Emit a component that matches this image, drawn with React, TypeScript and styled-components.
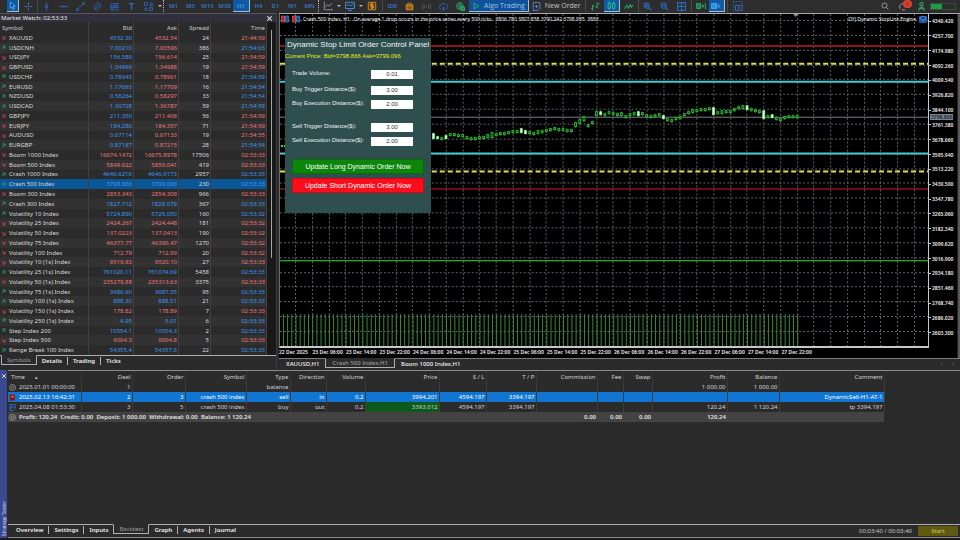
import React from "react";
import styled, { createGlobalStyle, css } from "styled-components";

const Global = createGlobalStyle`
  * { box-sizing: border-box; }
  html, body { margin: 0; background: #2b2b2b; }
  body { font-family: "Noto Sans", "Open Sans", sans-serif; font-size: 6px; line-height: 8px; color: #dadada; overflow: hidden; }
  button, input { font: inherit; color: inherit; border: 0; padding: 0; margin: 0; background: none; border-radius: 0; }
`;

const BLUE = "#3b98ec";
const RED = "#f07676";
const GREEN = "#27a567";

const Page = styled.div`
  height: 100vh;
  display: grid;
  grid-template-rows: 13px minmax(0, 1fr) 170px;
  grid-template-columns: minmax(0, 1fr);
`;

/* ---------- toolbar ---------- */
const Toolbar = styled.header`
  display: flex;
  align-items: stretch;
  height: 12px;
  padding: 0 4px 0 7px;
  background: #2d2d2e;
`;
const Tool = styled.button<{ $w?: number; $on?: boolean; $c?: string }>`
  flex: none;
  width: ${(p) => p.$w ?? 17}px;
  display: flex;
  align-items: center;
  justify-content: center;
  color: ${(p) => p.$c ?? "#2c69bd"};
  ${(p) =>
    p.$on &&
    css`
      background: #0f5aa3;
      border-right: 1px solid #a8bccd;
      border-bottom: 1px solid #a8bccd;
    `}
`;
const Period = styled(Tool)`
  font-weight: 500;
  color: ${(p) => (p.$on ? "#4ba4f6" : "#3580de")};
`;
const Wide = styled.button<{ $on?: boolean }>`
  flex: none;
  display: flex;
  align-items: center;
  gap: 4px;
  padding: 0 3px;
  font-size: 7px;
  font-family: "Open Sans", "Noto Sans", sans-serif;
  color: ${(p) => (p.$on ? "#a3c8e6" : "#c6c6c6")};
  background: ${(p) => (p.$on ? "#0f519b" : "transparent")};
  border-right: ${(p) => (p.$on ? "1px solid #a8bccd" : "0")};
  border-bottom: ${(p) => (p.$on ? "1px solid #a8bccd" : "0")};
`;
const Sep = styled.span<{ $dotted?: boolean; $m?: number }>`
  flex: none;
  width: 1px;
  margin: 0 ${(p) => p.$m ?? 0}px;
  border-left: 1px ${(p) => (p.$dotted ? "dotted #b5b5b5" : "solid #4b4b4b")};
`;
const Caret = styled.i<{ $w: number }>`
  flex: none;
  width: ${(p) => p.$w}px;
  display: flex;
  align-items: center;
  justify-content: center;
  &::before {
    content: "";
    border: 2px solid transparent;
    border-top-color: #b8b8b8;
    border-bottom: 0;
  }
`;
const Push = styled.span`
  flex: 1;
`;
const Battery = styled.span`
  align-self: center;
  flex: none;
  width: 26px;
  height: 7px;
  border: 1px solid #3c4d40;
  background: linear-gradient(90deg, #1f9d46 0 11px, #263029 11px);
`;
const Badge = styled.span`
  position: absolute;
  top: 0;
  right: 0;
  width: 9px;
  height: 8px;
  border-radius: 4px;
  background: #d9402b;
  color: #7e1d12;
  font-size: 5px;
  line-height: 8px;
`;
const BellTool = styled(Tool)`
  position: relative;
`;

const shapes: Record<string, React.ReactNode> = {
  cursor: <path d="M4 2v11l3-3 2 5 2-1-2-5h4z" fill="#0e3d7d" stroke="#5cb1ff" />,
  cross: <path d="M8 1v5M8 10v5M1 8h5M10 8h5M8 7.500v1" stroke="#3d83d8" />,
  vline: <path d="M8 0v5M8 11v5M6 6h4v4H6z" />,
  hline: <path d="M0 8h6M10 8h6M6 7h4v2H6z" />,
  trend: <path d="M4 12 12 4M1 12h3v3H1zM12 1h3v3h-3z" />,
  channel: <path d="M1 9 9 1M6 15l9-8M3 12l9-8M1 9l5 6M9 1l6 6" />,
  fibo: <path d="M0 3h16M0 7h16M0 10h16M0 14h16M1 14l13-11" />,
  text: <path d="M3 3h10M8 3v11" strokeWidth="2.400" />,
  figures: <path d="M1 1h5v5H1zM10 6l3-5 3 5zM1 13a2.500 2.500 0 1 0 5 0 2.500 2.500 0 1 0-5 0M10 10h5v5h-5z" />,
  axis: <path d="M2 1v13h14M3 10l4-4 3 2 5-5" stroke="#8a8f92" />,
  monitor: <path d="M1 2h14v10H1zM5 15h6M3 8l3-3 3 3 4-3" stroke="#3f8ee0" />,
  money: (
    <>
      <path d="M2 2h12v12H2z" stroke="#c97f1c" fill="#5f3d0d" />
      <path d="M10 5H6v3h4v3H6M8 3v10" stroke="#e9a131" />
    </>
  ),
  bag: (
    <>
      <path d="M2 5h12v9H2z" fill="#b66e14" stroke="#cd8427" />
      <path d="M5 5V2h6v3" stroke="#cd8427" />
      <path d="M6 8v4M10 8v4" stroke="#6d3f08" />
    </>
  ),
  signal: <path d="M8 7v2M5 5q-2 3 0 6M11 5q2 3 0 6M2 3q-3 5 0 10M14 3q3 5 0 10" stroke="#5d6265" />,
  cloud: <path d="M4 12H3a3 3 0 0 1 0-6 5 5 0 0 1 9-1 3.500 3.500 0 0 1 1 7h-1M8 8v7M5.500 12 8 15l2.500-3" />,
  globe: (
    <>
      <path d="M1 7a6 6 0 1 0 12 0 6 6 0 1 0-12 0M1 7h12M7 1q-4 6 0 12M7 1q4 6 0 12" stroke="#279f63" />
      <path d="M9 9h6v6H9z" fill="#1d7b4b" stroke="#35b67b" />
    </>
  ),
  play: <path d="M4 2v12l9-6z" stroke="#29b36e" strokeWidth="2" />,
  order: <path d="M2 1h12v11l-3 3H2zM8 5v6M5 8h6" stroke="#5c87c8" />,
  bars: <path d="M3 5v10M3 12H0M3 7h3M11 1v10M11 9H8M11 3h4" stroke={GREEN} strokeWidth="2" />,
  candles: <path d="M2 4h4v9H2zM10 4h4v9h-4zM4 1v3M4 13v2M12 1v3M12 13v2" stroke="#2ecb80" />,
  wave: <path d="M1 12 5 6l3 5 3-6 2 4 3-4" stroke={GREEN} strokeWidth="2" />,
  zoomin: <path d="M2 6.500a4.500 4.500 0 1 0 9 0 4.500 4.500 0 1 0-9 0M10 10l5 5M4 6.500h5M6.500 4v5" strokeWidth="2" />,
  zoomout: <path d="M2 6.500a4.500 4.500 0 1 0 9 0 4.500 4.500 0 1 0-9 0M10 10l5 5M4 6.500h5" strokeWidth="2" />,
  grid: <path d="M1 1h14v14H1zM8 1v14M1 8h14" strokeWidth="2" />,
  scroll: (
    <>
      <path d="M1 4h6v8H1z" fill="#1a7d4a" stroke={GREEN} />
      <path d="M8 8h4M10 5l3 3-3 3M15 3v10" stroke={GREEN} />
    </>
  ),
  shift: (
    <>
      <path d="M1 4h6v8H1z" fill="#2d87d6" stroke="#49a6ee" />
      <path d="M9 3v10M11 8h4M13 5l-2 3 2 3" stroke="#49a6ee" />
    </>
  ),
  camera: (
    <>
      <path d="M1 1h14v4M1 1v14h2" strokeDasharray="2 2" />
      <path d="M4 7h11v8H4zM8 11a1.500 1.500 0 1 0 3 0 1.500 1.500 0 1 0-3 0" />
    </>
  ),
  search: <path d="M2 7a5 5 0 1 0 10 0A5 5 0 1 0 2 7M11 11l4 4" stroke="#b2b2b2" />,
  bell: <path d="M2 12a6 6 0 1 1 11-4M5 14h6" stroke="#a7a7a7" />,
  person: <path d="M5 4a3 3 0 1 0 6 0 3 3 0 1 0-6 0M8 7v4M3 15q0-5 5-5t5 5M5 12h6" stroke={GREEN} strokeWidth="2" />,
  up: <path d="M3 13 12 4M5 3h8v8" stroke={GREEN} strokeWidth="3" />,
  down: <path d="m3 3 9 9M13 5v8H5" stroke="#d3424c" strokeWidth="3" />,
  close: <path d="m3 3 10 10M13 3 3 13" stroke="#e6e6e6" strokeWidth="2.400" />,
  coin: <path d="M1 8a7 7 0 1 0 14 0A7 7 0 1 0 1 8M5 8a3 3 0 1 0 6 0 3 3 0 1 0-6 0" stroke="#a7a7a7" />,
  sell: (
    <>
      <path d="M2 1h11v14H2z" stroke="#a92a26" fill="#7e1616" />
      <path d="M6 4h4v4H6z" fill="#e98a80" stroke="none" />
    </>
  ),
  buy: <path d="M2 1h12v9l-5 5H2zM5 4v7M5 7h7" stroke="#2d78cf" strokeWidth="2" />,
  cap: (
    <>
      <path d="M1 3h14v12H1z" fill="#123f86" stroke="#2468b8" />
      <path d="m1 6 7-4 7 4-7 4zM4 8v4h8V8" stroke="#4893e6" />
    </>
  ),
  depth: (
    <>
      <path d="M1 2h6v12H1z" fill="#b52222" stroke="#d85a50" />
      <path d="M9 2h6v12H9z" fill="#174fa0" stroke="#4a7ed0" />
    </>
  ),
};
const Svg = styled.svg`
  flex: none;
  display: block;
  fill: none;
  stroke: currentColor;
  stroke-width: 1.6;
`;
const Icon = ({ n, s = 9 }: { n: string; s?: number }) => (
  <Svg width={s} height={s} viewBox="0 0 16 16" aria-hidden="true">
    {shapes[n]}
  </Svg>
);

/* ---------- market watch ---------- */
const Main = styled.main`
  display: grid;
  grid-template-columns: 277px minmax(0, 1fr);
  column-gap: 2px;
  min-height: 0;
`;
const Watch = styled.section`
  display: grid;
  grid-template-rows: 9px minmax(0, 1fr) 15px;
  min-height: 0;
  border-right: 1px solid #3b3b3b;
`;
const WatchTitle = styled.div`
  display: flex;
  justify-content: space-between;
  align-items: center;
  padding: 0 3px 0 1px;
  background: #30313c;
  color: #ececec;
  border-top: 1px solid #55565c;
`;
const WatchBody = styled.div`
  display: grid;
  grid-template-columns: minmax(0, 1fr) 9px;
  min-height: 0;
`;
const ScrollTrack = styled.div`
  display: flex;
  justify-content: center;
  background: #191919;
  padding-top: 8px;
  &::before {
    content: "";
    width: 1px;
    height: 70%;
    background: #a5a5a5;
  }
`;
const Quotes = styled.table`
  display: grid;
  grid-template-rows: 11px minmax(0, 1fr);
  min-height: 0;
  background: #2b2b2b;
  tbody { display: grid; grid-auto-rows: minmax(0, 1fr); min-height: 0; }
`;
const QuoteRow = styled.tr<{ $sel?: boolean }>`
  display: grid;
  grid-template-columns: minmax(0, 1fr) 45px 45px 32px 56px;
  align-items: stretch;
  thead & { height: 11px; }
  tbody &:nth-child(even) { background: #323232; }
  ${(p) => p.$sel && css`&& { background: #0b5696 !important; }`}
`;
const cell = css`
  display: flex;
  align-items: center;
  justify-content: flex-end;
  font-weight: 400;
  padding: 0 1px 0 0;
  min-width: 0;
  white-space: nowrap;
`;
const Cell = styled.td<{ $c?: string }>`
  ${cell}
  color: ${(p) => p.$c ?? "#dadada"};
  border-right: 1px solid #414141;
`;
const Head = styled.th`
  ${cell}
  color: #cccccc;
  border-right: 1px solid #414141;
  &:first-child { justify-content: flex-start; padding-left: 2px; }
`;
const SymbolCell = styled(Cell)`
  justify-content: flex-start;
  gap: 3px;
  padding-left: 1px;
`;

type Quote = [string, string, string, string, string, "u" | "d"];
const quotes: Quote[] = [
  ["XAUUSD", "4532.30", "4532.54", "24", "21:44:59", "d"],
  ["USDCNH", "7.00210", "7.00596", "386", "21:54:03", "u"],
  ["USDJPY", "156.589", "156.614", "25", "21:54:59", "d"],
  ["GBPUSD", "1.34969", "1.34988", "19", "21:54:59", "d"],
  ["USDCHF", "0.78943", "0.78961", "18", "21:54:59", "u"],
  ["EURUSD", "1.17693", "1.17709", "16", "21:54:54", "u"],
  ["NZDUSD", "0.58264", "0.58297", "33", "21:54:54", "u"],
  ["USDCAD", "1.36728", "1.36787", "59", "21:54:59", "u"],
  ["GBPJPY", "211.350", "211.406", "56", "21:54:59", "d"],
  ["EURJPY", "184.286", "184.357", "71", "21:54:59", "d"],
  ["AUDUSD", "0.67114", "0.67133", "19", "21:54:55", "d"],
  ["EURGBP", "0.87187", "0.87215", "28", "21:54:54", "u"],
  ["Boom 1000 Index", "16674.1472", "16675.8978", "17506", "02:53:33", "d"],
  ["Boom 500 Index", "5849.622", "5850.041", "419", "02:53:33", "d"],
  ["Crash 1000 Index", "4646.6216", "4646.9173", "2957", "02:53:33", "u"],
  ["Crash 500 Index", "3798.866", "3799.096", "230", "02:53:33", "u"],
  ["Boom 300 Index", "2853.343", "2854.309", "966", "02:53:33", "d"],
  ["Crash 300 Index", "1827.712", "1828.079", "367", "02:53:33", "u"],
  ["Volatility 10 Index", "5724.890", "5725.050", "160", "02:53:32", "u"],
  ["Volatility 25 Index", "2424.267", "2424.448", "181", "02:53:32", "d"],
  ["Volatility 50 Index", "137.0223", "137.0413", "190", "02:53:32", "d"],
  ["Volatility 75 Index", "46377.77", "46390.47", "1270", "02:53:32", "d"],
  ["Volatility 100 Index", "712.79", "712.99", "20", "02:53:32", "d"],
  ["Volatility 10 (1s) Index", "9519.83", "9520.10", "27", "02:53:33", "d"],
  ["Volatility 25 (1s) Index", "761020.11", "761074.69", "5458", "02:53:33", "u"],
  ["Volatility 50 (1s) Index", "235279.88", "235313.63", "3375", "02:53:33", "d"],
  ["Volatility 75 (1s) Index", "3686.60", "3687.55", "95", "02:53:33", "u"],
  ["Volatility 100 (1s) Index", "888.30", "888.51", "21", "02:53:33", "u"],
  ["Volatility 150 (1s) Index", "178.82", "178.89", "7", "02:53:33", "d"],
  ["Volatility 250 (1s) Index", "4.95", "5.01", "6", "02:53:33", "u"],
  ["Step Index 200", "10554.1", "10554.3", "2", "02:53:33", "u"],
  ["Step Index 500", "6004.3", "6004.8", "5", "02:53:33", "d"],
  ["Range Break 100 Index", "54355.4", "54357.6", "22", "02:53:33", "u"],
];

const Tabs = styled.nav<{ $pad?: number }>`
  display: flex;
  align-items: flex-start;
  border-top: 1px solid #b0b0b0;
  padding-left: ${(p) => p.$pad ?? 1}px;
  background: #2b2b2b;
`;
const Tab = styled.button<{ $on?: boolean }>`
  position: relative;
  flex: none;
  height: 10px;
  margin-top: ${(p) => (p.$on ? -1 : 0)}px;
  padding: 0 5px;
  color: ${(p) => (p.$on ? "#9c9c9c" : "#f0f0f0")};
  font-weight: ${(p) => (p.$on ? 400 : 600)};
  ${(p) =>
    p.$on
      ? css`
          background: #2b2b2b;
          border: 1px solid #b0b0b0;
          border-top-color: #2b2b2b;
        `
      : ""}
`;
const Divider = styled.i`
  flex: none;
  width: 1px;
  height: 8px;
  margin-top: 1px;
  background: #b0b0b0;
`;
const TabList = ({ items, active }: { items: string[]; active: string }) => (
  <>
    {items.map((t, i) => (
      <React.Fragment key={t}>
        {i > 0 && t !== active && items[i - 1] !== active && <Divider />}
        <Tab $on={t === active}>{t}</Tab>
      </React.Fragment>
    ))}
  </>
);

/* ---------- chart ---------- */
const Chart = styled.section`
  display: grid;
  grid-template-columns: minmax(0, 1fr) 28px 3px;
  grid-template-rows: minmax(0, 1fr) 10px 12px;
  min-height: 0;
  background: #000;
  border-top: 1px solid #a9a9a9;
  font-family: "Noto Sans", sans-serif;
  font-size: 5px;
  line-height: 6px;
  font-weight: 600;
  color: #f0f0f0;
  white-space: nowrap;
`;
const Plot = styled.div`
  position: relative;
  min-height: 0;
  border: solid #c8c8c8;
  border-width: 0 1px 2px 1px;
  border-left-color: #6e6e6e;
`;
const PlotSvg = styled.svg`
  display: block;
  width: 100%;
  height: 100%;
`;
const ChartTitle = styled.div`
  position: absolute;
  top: 1px;
  left: 1px;
  right: 1px;
  display: flex;
  align-items: center;
  gap: 3px;
  height: 8px;
  font-weight: 400;
  font-family: "Open Sans", "Noto Sans", sans-serif;
  color: #fff;
`;
const Pre = styled.span`
  white-space: pre;
`;
const PriceAxis = styled.div`
  position: relative;
  display: flex;
  flex-direction: column;
  justify-content: space-between;
  padding: 4px 0 12px;
`;
const Price = styled.span`
  display: flex;
  align-items: center;
  gap: 1px;
  &::before { content: ""; width: 2px; height: 1px; background: #c8c8c8; }
`;
const Current = styled.span`
  position: absolute;
  top: 30%;
  left: 1px;
  padding: 0 1px;
  background: #76828f;
  color: #1c2733;
`;
const SideScroll = styled.div`
  background: #5a5a5a;
  border-left: 1px solid #222;
  grid-row: span 2;
`;
const TimeAxis = styled.div`
  display: grid;
  grid-template-columns: repeat(16, minmax(0, 67fr)) minmax(0, 228fr);
  padding-top: 1px;
  grid-column: span 2;
  margin-right: 28px;
`;
const ChartTabs = styled(Tabs)`
  grid-column: 1 / -1;
  border-top-color: #7c7c7c;
  font-size: 6px;
  line-height: 8px;
  ${Tab} { font-weight: 500; padding: 0 6px; }
`;
const TabArrows = styled.span`
  margin-left: auto;
  padding: 1px 6px 0 0;
  color: #6b6b6b;
  display: flex;
  gap: 9px;
`;

const prices = Array.from({ length: 22 }, (_, i) => (4340.42 - 82.72 * i).toFixed(3));
const times = Array.from({ length: 16 }, (_, i) =>
  i === 0 ? "22 Dec 2025" : `${22 + Math.ceil(i / 3)} Dec ${["22:00", "06:00", "14:00"][i % 3]}`
);

/* course of the price: plot x, plot y */
const course: [number, number][] = [
  [153, 123], [158, 125], [162, 125], [170, 121], [182, 122], [191, 125], [203, 124], [216, 121], [228, 119],
  [246, 117], [254, 120], [260, 119], [267, 117], [275, 115], [288, 117], [304, 115], [312, 110], [320, 104],
  [328, 99], [336, 101], [346, 103], [354, 100], [364, 100], [371, 103], [380, 101], [388, 106], [392, 107],
  [400, 104], [409, 99], [417, 97], [430, 95], [434, 100], [442, 98], [451, 98], [459, 94], [463, 93], [468, 95],
  [480, 98], [484, 102], [493, 103], [501, 106], [509, 103], [519, 103],
];
const priceAt = (x: number) => {
  const k = Math.max(1, course.findIndex(([cx]) => cx >= x));
  const [x0, y0] = course[k - 1];
  const [x1, y1] = course[k];
  return y0 + ((y1 - y0) * (x - x0)) / (x1 - x0);
};
/* larger bodies, by candles counted back from the newest: top, bottom, falling */
const bodies: Record<number, [number, number, boolean]> = {
  87: [120, 125, true], 86: [123, 125, true], 84: [122, 125, true], 74: [121, 124, false], 73: [119, 124, false],
  66: [115, 119, true], 65: [117, 120, true], 62: [117, 120, false], 53: [109, 113, false], 52: [106, 110, false],
  51: [103, 107, false], 48: [98, 102, false], 47: [98, 101, true], 42: [99, 102, false], 38: [98, 102, true],
  36: [101, 103, false], 32: [102, 105, true], 28: [103, 105, false], 25: [96, 99, false], 20: [94, 101, true],
  18: [97, 100, false], 13: [92, 95, false], 12: [92, 96, true], 8: [97, 105, true], 6: [101, 104, true],
  3: [103, 105, false], 1: [102, 104, false],
};

const PlotDrawing = () => {
  const W = 649;
  const H = 333;
  const bars = Array.from({ length: 124 }, (_, i) => 518.5 - i * 4.1875);
  const cols = Array.from({ length: 38 }, (_, i) => 16 + i * 16.75);
  const rows = Array.from({ length: 22 }, (_, i) => 7 + i * 14.86);
  const level = (y: number, c: string, w: number, dash?: string) => (
    <path d={`M0 ${y}H${W}`} stroke={c} strokeWidth={w} strokeDasharray={dash} />
  );
  return (
    <PlotSvg viewBox={`0 0 ${W} ${H}`} preserveAspectRatio="none" aria-label="Price chart">
      <rect width={W} height={H} fill="#000" />
      <g stroke="#6f7983" strokeWidth="1" strokeDasharray="2 2" fill="none" opacity="0.85">
        {cols.map((x) => (
          <path key={x} d={`M${Math.round(x) - 0.5} 0V${H}`} />
        ))}
        {rows.map((y) => (
          <path key={y} d={`M0 ${Math.round(y) - 0.5}H${W}`} />
        ))}
      </g>
      <g stroke="#378a3d" strokeWidth="1">
        {bars.map((x) => (
          <path key={x} d={`M${x} 301V${H}`} />
        ))}
      </g>
      {level(32, "#8f1518", 2)}
      {level(50, "#dede55", 2, "5 3")}
      {level(68, "#45c9cf", 2)}
      {level(103.5, "#78828c", 1)}
      {level(140, "#45c9cf", 2)}
      {level(158, "#dede55", 2, "5 3")}
      {level(175.5, "#d81f26", 1)}
      {level(247.5, "#3bdc3b", 1)}
      <path d="M1 132.500h5" stroke="#3bdc3b" strokeWidth="2" strokeDasharray="2 1" />
      <path d="M514 0h5l-2.500 3z" fill="#8a949c" />
      <g>
        {Array.from({ length: 88 }, (_, j) => {
          const x = 518 - j * 4.1875;
          const y = Math.round(priceAt(x));
          const [top, bottom, falling] = bodies[j] ?? [y - 1, y + 1, false];
          return (
            <g key={j}>
              <path d={`M${x} ${top - 1}V${bottom + 1}`} stroke="#25a825" strokeWidth="1" />
              <rect
                x={x - 1}
                y={top}
                width="2"
                height={bottom - top}
                fill={falling ? "#e4ffe4" : "#0b3d0b"}
                stroke={falling ? "#8df08d" : "#2fc82f"}
                strokeWidth="0.800"
              />
            </g>
          );
        })}
      </g>
    </PlotSvg>
  );
};

/* ---------- order panel ---------- */
const OrderPanel = styled.form`
  position: absolute;
  top: 24px;
  left: 5px;
  width: 146px;
  display: flex;
  flex-direction: column;
  padding: 2px 7px 16px;
  background: #2f4f4f;
  color: #eef3f3;
  font-family: "Liberation Sans", sans-serif;
  font-weight: 400;
  font-size: 7px;
  line-height: 10px;
`;
const PanelTitle = styled.h2`
  margin: 0 -5px;
  font-size: 8px;
  font-weight: 400;
  line-height: 10px;
`;
const PanelPrice = styled.p`
  margin: 1px -7px 8px;
  font-size: 6px;
  color: #e6ee1e;
  white-space: pre;
`;
const Field = styled.div<{ $gap: number }>`
  display: flex;
  align-items: center;
  justify-content: space-between;
  padding-right: 11px;
  margin-bottom: ${(p) => p.$gap}px;
  font-size: 6px;
  label { line-height: 9px; padding-bottom: 1px; }
`;
const NumberBox = styled.input`
  width: 42px;
  height: 9px;
  background: #fff;
  color: #333;
  text-align: center;
`;
const Action = styled.button<{ $c: string }>`
  height: 15px;
  margin-bottom: 4px;
  background: ${(p) => p.$c};
  color: #fff;
  border: 1px solid #00000030;
`;
const fields: [string, string, number][] = [
  ["Trade Volume:", "0.01", 6],
  ["Buy Trigger Distance($):", "3.00", 4],
  ["Buy Execution Distance($):", "2.00", 13],
  ["Sell Trigger Distance($):", "3.00", 4],
  ["Sell Execution Distance($):", "2.00", 13],
];

/* ---------- tester ---------- */
const Tester = styled.section`
  display: grid;
  grid-template-columns: 7px minmax(0, 1fr);
  column-gap: 1px;
  background: #2b2b2b;
  border-bottom: 2px solid #1c1c1c;
`;
const Stripe = styled.div`
  display: flex;
  flex-direction: column;
  align-items: center;
  justify-content: space-between;
  padding: 3px 0 2px;
  background: #3b4a90;
  color: #d5dbf5;
  span { writing-mode: vertical-rl; transform: rotate(180deg); font-size: 5px; line-height: 6px; }
`;
const TesterBody = styled.div`
  display: flex;
  flex-direction: column;
  border-top: 1px solid #8b8b8b;
`;
const Deals = styled.table`
  border-collapse: collapse;
  table-layout: fixed;
  width: 876px;
`;
const DealRow = styled.tr<{ $bg?: string; $c?: string; $b?: boolean }>`
  height: 10px;
  background: ${(p) => p.$bg ?? "transparent"};
  color: ${(p) => p.$c ?? "#d2d2d2"};
  font-weight: ${(p) => (p.$b ? 600 : 400)};
`;
const dealCell = css`
  padding: 0 1px;
  text-align: right;
  font-weight: inherit;
  white-space: nowrap;
  &:first-child { text-align: left; padding-left: 1px; }
`;
const DealHead = styled.th`
  ${dealCell}
  height: 11px;
  border-right: 1px solid #353535;
  &:first-child { padding-left: 3px; }
`;
const DealCell = styled.td<{ $hit?: boolean; $lines?: boolean }>`
  ${dealCell}
  border-right: ${(p) => (p.$lines ? "1px solid #3c3c3c" : "0")};
  background: ${(p) => (p.$hit ? "#0d5a1d" : "transparent")};
`;
const WithIcon = styled.span`
  display: flex;
  align-items: center;
  gap: 3px;
`;
const columns: [string, number][] = [
  ["Time", 73], ["Deal", 51], ["Order", 53], ["Symbol", 61], ["Type", 44], ["Direction", 36], ["Volume", 39],
  ["Price", 74], ["S / L", 47], ["T / P", 50], ["Commission", 61], ["Fee", 26], ["Swap", 29], ["Profit", 75],
  ["Balance", 52], ["Comment", 105],
];
const deals = [
  { icon: "coin", bg: undefined, c: undefined, v: ["2025.01.01 00:00:00", "1", "", "", "balance", "", "", "", "", "", "", "", "", "1 000.00", "1 000.00", ""] },
  { icon: "sell", bg: "#1176d2", c: "#fff", v: ["2025.02.13 16:42:31", "2", "3", "crash 500 index", "sell", "in", "0.2", "3994.201", "4594.197", "3394.197", "", "", "", "", "", "DynamicSell-H1-AT-1"] },
  { icon: "buy", bg: undefined, c: undefined, v: ["2025.04.08 01:53:30", "3", "5", "crash 500 index", "buy", "out", "0.2", "3393.012", "4594.197", "3394.197", "", "", "", "120.24", "1 120.24", "tp 3394.197"] },
];
const Footer = styled.footer`
  margin-top: auto;
  display: grid;
  grid-template-columns: minmax(0, 1fr) auto;
  border-top: 1px solid #b0b0b0;
  border-bottom: 1px solid #8b8b8b;
`;
const FooterTabs = styled(Tabs)`
  border-top: 0;
  height: 12px;
`;
const Status = styled.div`
  display: flex;
  align-items: center;
  gap: 6px;
  padding-right: 2px;
  color: #c6c6c6;
`;
const Start = styled.button`
  width: 40px;
  height: 10px;
  background: #5f5a10;
  color: #cfc65a;
`;
const SortMark = styled.span`
  margin-left: 10px;
  font-size: 5px;
`;

export default function App() {
  return (
    <Page>
      <Global />
      <Toolbar>
        <Tool $w={12} $on aria-label="Cursor"><Icon n="cursor" /></Tool>
        <Tool $w={18} aria-label="Crosshair"><Icon n="cross" /></Tool>
        <Sep />
        {["vline", "hline", "trend", "channel", "fibo", "text", "figures"].map((n) => (
          <Tool key={n} aria-label={n}><Icon n={n} /></Tool>
        ))}
        <Caret $w={5} />
        <Sep $dotted $m={1} />
        {["M1", "M5", "M15", "M30", "H1", "H4", "D1", "W1", "MN"].map((n) => (
          <Period key={n} $on={n === "H1"}>{n}</Period>
        ))}
        <Sep $dotted />
        <Tool aria-label="Indicators"><Icon n="axis" s={10} /></Tool>
        <Caret $w={5} />
        <Tool aria-label="Templates"><Icon n="monitor" s={10} /></Tool>
        <Caret $w={5} />
        <Tool $w={18} aria-label="Market"><Icon n="money" s={10} /></Tool>
        <Sep $m={1} />
        <Period>IDE</Period>
        {["bag", "signal", "cloud", "globe"].map((n) => (
          <Tool key={n} aria-label={n}><Icon n={n} /></Tool>
        ))}
        <Wide $on><Icon n="play" s={8} />Algo Trading</Wide>
        <Wide><Icon n="order" />New Order</Wide>
        <Sep $m={1} />
        <Tool aria-label="Bars"><Icon n="bars" /></Tool>
        <Tool $w={16} $on aria-label="Candles"><Icon n="candles" /></Tool>
        <Tool $w={18} aria-label="Line"><Icon n="wave" /></Tool>
        <Sep />
        {["zoomin", "zoomout", "grid"].map((n) => (
          <Tool key={n} aria-label={n}><Icon n={n} /></Tool>
        ))}
        <Sep $m={1} />
        <Tool $w={16} aria-label="Auto scroll"><Icon n="scroll" s={10} /></Tool>
        <Tool $w={16} $on aria-label="Chart shift"><Icon n="shift" s={10} /></Tool>
        <Sep $m={2} />
        <Tool aria-label="Screenshot"><Icon n="camera" s={10} /></Tool>
        <Push />
        <Tool $w={18} aria-label="Search"><Icon n="search" s={8} /></Tool>
        <BellTool $w={18} aria-label="Notifications"><Icon n="bell" /><Badge>6</Badge></BellTool>
        <Tool $w={18} aria-label="Account"><Icon n="person" /></Tool>
        <Battery />
      </Toolbar>

      <Main>
        <Watch>
          <WatchTitle>Market Watch: 02:53:33<Icon n="close" s={7} /></WatchTitle>
          <WatchBody>
            <Quotes>
              <thead>
                <QuoteRow>
                  {["Symbol", "Bid", "Ask", "Spread", "Time"].map((h) => (
                    <Head key={h} scope="col">{h}</Head>
                  ))}
                </QuoteRow>
              </thead>
              <tbody>
                {quotes.map(([s, bid, ask, spread, time, dir], i) => {
                  const tone = dir === "u" ? BLUE : RED;
                  return (
                    <QuoteRow key={s} $sel={s === "Crash 500 Index"}>
                      <SymbolCell><Icon n={dir === "u" ? "up" : "down"} s={5} />{s}</SymbolCell>
                      <Cell $c={i < 12 ? BLUE : tone}>{bid}</Cell>
                      <Cell $c={i < 12 ? RED : tone}>{ask}</Cell>
                      <Cell>{spread}</Cell>
                      <Cell $c={tone}>{time}</Cell>
                    </QuoteRow>
                  );
                })}
              </tbody>
            </Quotes>
            <ScrollTrack />
          </WatchBody>
          <Tabs>
            <TabList items={["Symbols", "Details", "Trading", "Ticks"]} active="Symbols" />
          </Tabs>
        </Watch>

        <Chart>
          <Plot>
            <PlotDrawing />
            <ChartTitle>
              <Icon n="depth" s={8} />
              <Icon n="depth" s={8} />
              <Pre>{"Crash 500 Index, H1:  On average 1 drop occurs in the price series every 500 ticks.  3806.780 3807.858 3790.242 3798.955  3883"}</Pre>
              <Push />
              <span>DYJ Dynamic StopLink Engine</span>
              <Icon n="cap" s={8} />
            </ChartTitle>
            <OrderPanel onSubmit={(e) => e.preventDefault()}>
              <PanelTitle>Dynamic Stop Limit Order Control Panel</PanelTitle>
              <PanelPrice>Current Price: Bid=3798.866 Ask=3799.096</PanelPrice>
              {fields.map(([label, value, gap], i) => (
                <Field key={label} $gap={gap}>
                  <label htmlFor={`f${i}`}>{label}</label>
                  <NumberBox id={`f${i}`} defaultValue={value} />
                </Field>
              ))}
              <Action type="button" $c="#0b860b">Update Long Dynamic Order Now</Action>
              <Action type="button" $c="#fb0d1b">Update Short Dynamic Order Now</Action>
            </OrderPanel>
          </Plot>
          <PriceAxis>
            {prices.map((p) => <Price key={p}>{p}</Price>)}
            <Current>3798.866</Current>
          </PriceAxis>
          <SideScroll />
          <TimeAxis>
            {times.map((t) => <span key={t}>{t}</span>)}
          </TimeAxis>
          <ChartTabs $pad={1}>
            <TabList
              items={["XAUUSD,H1", "Crash 500 Index,H1", "Boom 1000 Index,H1"]}
              active="Crash 500 Index,H1"
            />
            <TabArrows><span>‹</span><span>›</span></TabArrows>
          </ChartTabs>
        </Chart>
      </Main>

      <Tester>
        <Stripe><Icon n="close" s={6} /><span>Strategy Tester</span></Stripe>
        <TesterBody>
          <Deals>
            <colgroup>
              {columns.map(([h, w]) => <col key={h} width={w} />)}
            </colgroup>
            <thead>
              <DealRow>
                {columns.map(([h], i) => (
                  <DealHead key={h} scope="col">{h}{i === 0 && <SortMark>▴</SortMark>}</DealHead>
                ))}
              </DealRow>
            </thead>
            <tbody>
              {deals.map((d) => (
                <DealRow key={d.icon} $bg={d.bg} $c={d.c}>
                  {d.v.map((v, i) => (
                    <DealCell key={i} $lines $hit={d.icon === "buy" && i === 7}>
                      {i === 0 ? <WithIcon><Icon n={d.icon} s={7} />{v}</WithIcon> : v}
                    </DealCell>
                  ))}
                </DealRow>
              ))}
              <DealRow $bg="#434343" $c="#e2e2e2" $b>
                <DealCell colSpan={10}>
                  <WithIcon>
                    <Icon n="coin" s={7} />
                    <Pre>{"Profit: 120.24  Credit: 0.00  Deposit: 1 000.00  Withdrawal: 0.00  Balance: 1 120.24"}</Pre>
                  </WithIcon>
                </DealCell>
                <DealCell>0.00</DealCell>
                <DealCell>0.00</DealCell>
                <DealCell>0.00</DealCell>
                <DealCell>120.24</DealCell>
                <DealCell colSpan={2} />
              </DealRow>
            </tbody>
          </Deals>
          <Footer>
            <FooterTabs $pad={3}>
              <TabList
                items={["Overview", "Settings", "Inputs", "Backtest", "Graph", "Agents", "Journal"]}
                active="Backtest"
              />
            </FooterTabs>
            <Status>
              <span>00:03:40 / 00:03:40</span>
              <Start>Start</Start>
            </Status>
          </Footer>
        </TesterBody>
      </Tester>
    </Page>
  );
}
